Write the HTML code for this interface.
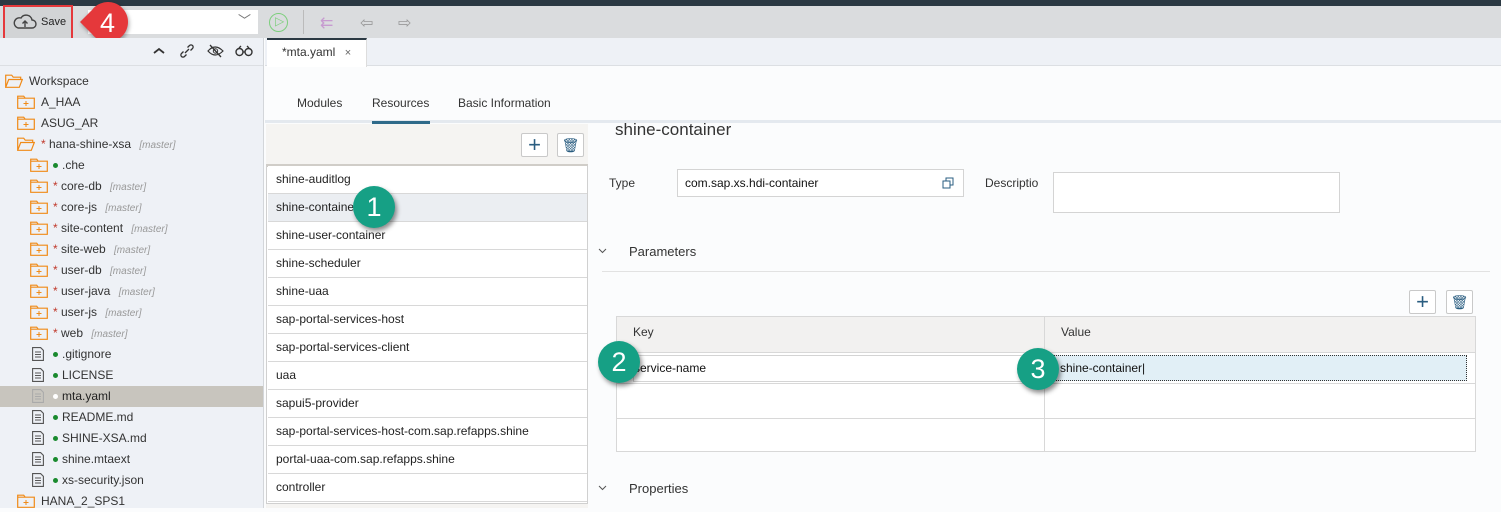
<!DOCTYPE html><html><head><meta charset="utf-8"><style>
*{box-sizing:border-box;margin:0;padding:0}
body{width:1501px;height:508px;overflow:hidden;position:relative;font-family:"Liberation Sans",sans-serif;font-size:12px;color:#333;background:#fbfcfd}
.a{position:absolute}
.t{position:absolute;white-space:nowrap}
.row{position:absolute;left:0;width:263px;height:21px;line-height:21px;font-size:12px;color:#333}
.m{color:#999;font-style:italic;font-size:10px;margin-left:5px}
.st{color:#c0392b}
.dot{display:inline-block;width:5px;height:5px;border-radius:50%;background:#1a8a2e;margin-right:4px;vertical-align:middle}
.ic{position:absolute;top:3px}
.li{position:absolute;left:268px;width:319px;height:28px;line-height:27px;padding-left:8px;background:#fff;border-bottom:1px solid #d8d8d8;font-size:12px;color:#222}
.badge{position:absolute;width:42px;height:42px;border-radius:50%;background:#16a085;color:#fff;font-size:27px;text-align:center;line-height:42px;box-shadow:2px 3px 5px rgba(0,0,0,.45)}
.btn{position:absolute;width:27px;height:24px;border:1px solid #c9c9c9;background:#fff;border-radius:2px;color:#2a5d80;text-align:center;font-size:22px;line-height:22px}
</style></head><body>
<svg width="0" height="0" style="position:absolute"><defs>
<symbol id="fc" viewBox="0 0 18 14"><path d="M0.7 13.3V1.2h6l1.5 2h9.1v10.1z M0.7 3.2h16.6" fill="none" stroke="#f08a17" stroke-width="1.2"/><path d="M9 6v5M6.5 8.5h5" stroke="#f08a17" stroke-width="1"/></symbol>
<symbol id="fop" viewBox="0 0 18 14"><path d="M0.7 13.3V1.2h6l1.5 2h7.5v2.3 M0.7 13.3l3-7.8h13.6l-3 7.8z" fill="none" stroke="#f08a17" stroke-width="1.2"/></symbol>
<symbol id="fl" viewBox="0 0 12 14"><path d="M0.6 0.6h8l2.8 2.8v10H0.6z" fill="none" stroke="#555" stroke-width="1.1"/><path d="M3 5h6M3 7.5h6M3 10h6" stroke="#555" stroke-width="1"/></symbol>
</defs></svg>
<div class="a" style="left:0;top:0;width:1501px;height:6px;background:#2b3943"></div>
<div class="a" style="left:0;top:6px;width:1501px;height:32px;background:#dadcde"></div>
<div class="a" style="left:3px;top:5px;width:70px;height:38px;border:2.5px solid #e5383b;background:#d2d4d6"></div>
<svg class="a" style="left:13px;top:14px" width="24" height="16" viewBox="0 0 24 16"><path d="M5 14h14a4 4 0 0 0 0-8 6 6 0 0 0-11-2 4.5 4.5 0 0 0-3 10z" fill="none" stroke="#444" stroke-width="1.4"/><path d="M12 13V7M9.5 9.5 12 7l2.5 2.5" fill="none" stroke="#444" stroke-width="1.4"/></svg>
<div class="t" style="left:41px;top:16px;font-size:11px;color:#222">Save</div>
<div class="a" style="left:88px;top:10px;width:170px;height:24px;background:#fff"></div>
<div class="t" style="left:238px;top:10px;color:#777;font-size:13px">﹀</div>
<svg class="a" style="left:78px;top:0px" width="60" height="48"><path d="M2 22 L14 10 A20 20 0 1 1 14 34 Z" fill="#e5383b" style="filter:drop-shadow(1px 2px 2px rgba(0,0,0,.35))"/><text x="22" y="32" font-family="Liberation Sans" font-size="27" fill="#fff">4</text></svg>
<div class="a" style="left:269px;top:13px;width:19px;height:19px;border:1.5px solid #7dcf7d;border-radius:50%"></div>
<div class="t" style="left:275px;top:14px;color:#7dcf7d;font-size:12px">▷</div>
<div class="a" style="left:303px;top:10px;width:1px;height:24px;background:#bbb"></div>
<div class="t" style="left:320px;top:13px;color:#c79bd0;font-size:16px">⇇</div>
<div class="t" style="left:360px;top:13px;color:#999;font-size:16px">⇦</div>
<div class="t" style="left:398px;top:13px;color:#999;font-size:16px">⇨</div>
<!-- left panel -->
<div class="a" style="left:0;top:38px;width:264px;height:470px;background:#eef1f6;border-right:1px solid #d3d6da"></div>
<div class="a" style="left:0;top:65px;width:263px;height:1px;background:#dcdfe3"></div>
<svg class="a" style="left:153px;top:47px" width="12" height="8"><path d="M1 6l5-4 5 4" fill="none" stroke="#333" stroke-width="1.8"/></svg>
<svg class="a" style="left:180px;top:44px" width="14" height="14"><path d="M5 9l4-4M3.5 7.5l-2 2a2 2 0 0 0 3 3l2-2M10.5 6.5l2-2a2 2 0 0 0-3-3l-2 2" fill="none" stroke="#333" stroke-width="1.3"/></svg>
<svg class="a" style="left:207px;top:44px" width="17" height="14"><path d="M1 7q7-8 15 0q-8 8-15 0z" fill="none" stroke="#333" stroke-width="1.2"/><circle cx="8.5" cy="7" r="2.2" fill="none" stroke="#333"/><path d="M3 1l11 12" stroke="#333" stroke-width="1.3"/></svg>
<svg class="a" style="left:235px;top:45px" width="18" height="12"><circle cx="4.5" cy="7" r="3.5" fill="none" stroke="#333" stroke-width="1.4"/><circle cx="13.5" cy="7" r="3.5" fill="none" stroke="#333" stroke-width="1.4"/><path d="M4 3l2-2M14 3l-2-2M8 7h2" stroke="#333" stroke-width="1.3"/></svg>
<div class="row" style="top:71px"><svg class="ic" style="left:5px" width="18" height="14"><use href="#fop"/></svg><span class="a" style="left:29px">Workspace</span></div>
<div class="row" style="top:92px"><svg class="ic" style="left:17px" width="18" height="14"><use href="#fc"/></svg><span class="a" style="left:41px">A_HAA</span></div>
<div class="row" style="top:113px"><svg class="ic" style="left:17px" width="18" height="14"><use href="#fc"/></svg><span class="a" style="left:41px">ASUG_AR</span></div>
<div class="row" style="top:134px"><svg class="ic" style="left:17px" width="18" height="14"><use href="#fop"/></svg><span class="a" style="left:41px"><span class="st">*</span> hana-shine-xsa <span class="m">[master]</span></span></div>
<div class="row" style="top:155px"><svg class="ic" style="left:30px" width="18" height="14"><use href="#fc"/></svg><span class="a" style="left:53px"><span class="dot"></span>.che</span></div>
<div class="row" style="top:176px"><svg class="ic" style="left:30px" width="18" height="14"><use href="#fc"/></svg><span class="a" style="left:53px"><span class="st">*</span> core-db <span class="m">[master]</span></span></div>
<div class="row" style="top:197px"><svg class="ic" style="left:30px" width="18" height="14"><use href="#fc"/></svg><span class="a" style="left:53px"><span class="st">*</span> core-js <span class="m">[master]</span></span></div>
<div class="row" style="top:218px"><svg class="ic" style="left:30px" width="18" height="14"><use href="#fc"/></svg><span class="a" style="left:53px"><span class="st">*</span> site-content <span class="m">[master]</span></span></div>
<div class="row" style="top:239px"><svg class="ic" style="left:30px" width="18" height="14"><use href="#fc"/></svg><span class="a" style="left:53px"><span class="st">*</span> site-web <span class="m">[master]</span></span></div>
<div class="row" style="top:260px"><svg class="ic" style="left:30px" width="18" height="14"><use href="#fc"/></svg><span class="a" style="left:53px"><span class="st">*</span> user-db <span class="m">[master]</span></span></div>
<div class="row" style="top:281px"><svg class="ic" style="left:30px" width="18" height="14"><use href="#fc"/></svg><span class="a" style="left:53px"><span class="st">*</span> user-java <span class="m">[master]</span></span></div>
<div class="row" style="top:302px"><svg class="ic" style="left:30px" width="18" height="14"><use href="#fc"/></svg><span class="a" style="left:53px"><span class="st">*</span> user-js <span class="m">[master]</span></span></div>
<div class="row" style="top:323px"><svg class="ic" style="left:30px" width="18" height="14"><use href="#fc"/></svg><span class="a" style="left:53px"><span class="st">*</span> web <span class="m">[master]</span></span></div>
<div class="row" style="top:344px"><svg class="ic" style="left:32px" width="12" height="14"><use href="#fl"/></svg><span class="a" style="left:53px"><span class="dot"></span>.gitignore</span></div>
<div class="row" style="top:365px"><svg class="ic" style="left:32px" width="12" height="14"><use href="#fl"/></svg><span class="a" style="left:53px"><span class="dot"></span>LICENSE</span></div>
<div class="row" style="top:386px;background:#c8c5be"><svg class="ic" style="left:32px" width="12" height="14"><use href="#fl" style="filter:invert(1)"/></svg><span class="a" style="left:53px;color:#222"><span class="dot" style="background:#fff"></span>mta.yaml</span></div>
<div class="row" style="top:407px"><svg class="ic" style="left:32px" width="12" height="14"><use href="#fl"/></svg><span class="a" style="left:53px"><span class="dot"></span>README.md</span></div>
<div class="row" style="top:428px"><svg class="ic" style="left:32px" width="12" height="14"><use href="#fl"/></svg><span class="a" style="left:53px"><span class="dot"></span>SHINE-XSA.md</span></div>
<div class="row" style="top:449px"><svg class="ic" style="left:32px" width="12" height="14"><use href="#fl"/></svg><span class="a" style="left:53px"><span class="dot"></span>shine.mtaext</span></div>
<div class="row" style="top:470px"><svg class="ic" style="left:32px" width="12" height="14"><use href="#fl"/></svg><span class="a" style="left:53px"><span class="dot"></span>xs-security.json</span></div>
<div class="row" style="top:491px"><svg class="ic" style="left:17px" width="18" height="14"><use href="#fc"/></svg><span class="a" style="left:41px">HANA_2_SPS1</span></div>
<!-- tabs -->
<div class="a" style="left:265px;top:38px;width:1236px;height:28px;background:#eef1f6;border-bottom:1px solid #dcdfe3"></div>
<div class="a" style="left:267px;top:38px;width:100px;height:29px;background:#fff;border-top:2px solid #2b3943;border-right:1px solid #ddd"></div>
<div class="t" style="left:282px;top:45px;font-size:12px;color:#333">*mta.yaml <span style="margin-left:6px;font-size:11px;color:#666">×</span></div>
<div class="a" style="left:265px;top:67px;width:1236px;height:56px;background:#fbfcfd;border-bottom:3px solid #e4e9ef"></div>
<div class="t" style="left:297px;top:96px;font-size:12px;color:#333">Modules</div>
<div class="t" style="left:372px;top:96px;font-size:12px;color:#333">Resources</div>
<div class="a" style="left:372px;top:121px;width:58px;height:3px;background:#2e6a8a"></div>
<div class="t" style="left:458px;top:96px;font-size:12px;color:#333">Basic Information</div>
<!-- resource list -->
<div class="a" style="left:266px;top:124px;width:322px;height:384px;background:#f5f4f2"></div>
<div class="btn" style="left:521px;top:133px">+</div>
<div class="btn" style="left:557px;top:133px;font-size:14px">🗑︎</div>
<div class="a" style="left:266px;top:164px;width:322px;height:340px;border:1px solid #d0d0d0;border-top:3px solid #d0cdc8;background:#fff"></div>
<div class="li" style="top:166px">shine-auditlog</div>
<div class="li" style="top:194px;background:#ebeef2">shine-container</div>
<div class="li" style="top:222px">shine-user-container</div>
<div class="li" style="top:250px">shine-scheduler</div>
<div class="li" style="top:278px">shine-uaa</div>
<div class="li" style="top:306px">sap-portal-services-host</div>
<div class="li" style="top:334px">sap-portal-services-client</div>
<div class="li" style="top:362px">uaa</div>
<div class="li" style="top:390px">sapui5-provider</div>
<div class="li" style="top:418px">sap-portal-services-host-com.sap.refapps.shine</div>
<div class="li" style="top:446px">portal-uaa-com.sap.refapps.shine</div>
<div class="li" style="top:474px">controller</div>
<!-- details -->
<div class="t" style="left:615px;top:120px;font-size:17px;color:#333">shine-container</div>
<div class="t" style="left:609px;top:176px;font-size:12px;color:#333">Type</div>
<div class="a" style="left:677px;top:169px;width:287px;height:28px;border:1px solid #d4d4d4;background:#fff"></div>
<div class="t" style="left:685px;top:176px;font-size:12px;color:#111">com.sap.xs.hdi-container</div>
<svg class="a" style="left:942px;top:177px" width="12" height="12"><rect x="1" y="4" width="7" height="7" fill="none" stroke="#2a5d80"/><path d="M4 4V1h7v7H8" fill="none" stroke="#2a5d80"/></svg>
<div class="t" style="left:985px;top:176px;font-size:12px;color:#333">Descriptio</div>
<div class="a" style="left:1053px;top:172px;width:287px;height:41px;border:1px solid #d4d4d4;background:#fff"></div>
<svg class="a" style="left:598px;top:248px" width="9" height="6"><path d="M1 1l3.5 3.5L8 1" fill="none" stroke="#555"/></svg>
<div class="t" style="left:629px;top:244px;font-size:13px;color:#333">Parameters</div>
<div class="a" style="left:602px;top:271px;width:888px;height:1px;background:#e2e2e2"></div>
<div class="btn" style="left:1409px;top:290px">+</div>
<div class="btn" style="left:1446px;top:290px;font-size:14px">🗑︎</div>
<div class="a" style="left:616px;top:316px;width:860px;height:136px;border:1px solid #d8d8d8;background:#fff"></div>
<div class="a" style="left:617px;top:317px;width:858px;height:36px;background:#f2f1f0;border-bottom:1px solid #d8d8d8"></div>
<div class="a" style="left:1044px;top:317px;width:1px;height:135px;background:#d8d8d8"></div>
<div class="t" style="left:633px;top:325px;font-size:12px;color:#333">Key</div>
<div class="t" style="left:1061px;top:325px;font-size:12px;color:#333">Value</div>
<div class="a" style="left:617px;top:383px;width:858px;height:1px;background:#d8d8d8"></div>
<div class="a" style="left:617px;top:418px;width:858px;height:1px;background:#d8d8d8"></div>
<div class="a" style="left:633px;top:355px;width:390px;height:27px;border:1px solid #d4d4d4;background:#fff"></div>
<div class="t" style="left:634px;top:361px;font-size:12px;color:#111">service-name</div>
<div class="a" style="left:1053px;top:355px;width:414px;height:26px;border:1px dotted #333;background:#e1eff6"></div>
<div class="t" style="left:1060px;top:361px;font-size:12px;color:#111">shine-container|</div>
<svg class="a" style="left:598px;top:485px" width="9" height="6"><path d="M1 1l3.5 3.5L8 1" fill="none" stroke="#555"/></svg>
<div class="t" style="left:629px;top:481px;font-size:13px;color:#333">Properties</div>
<div class="badge" style="left:353px;top:186px">1</div>
<div class="badge" style="left:598px;top:341px">2</div>
<div class="badge" style="left:1017px;top:348px">3</div>
</body></html>
